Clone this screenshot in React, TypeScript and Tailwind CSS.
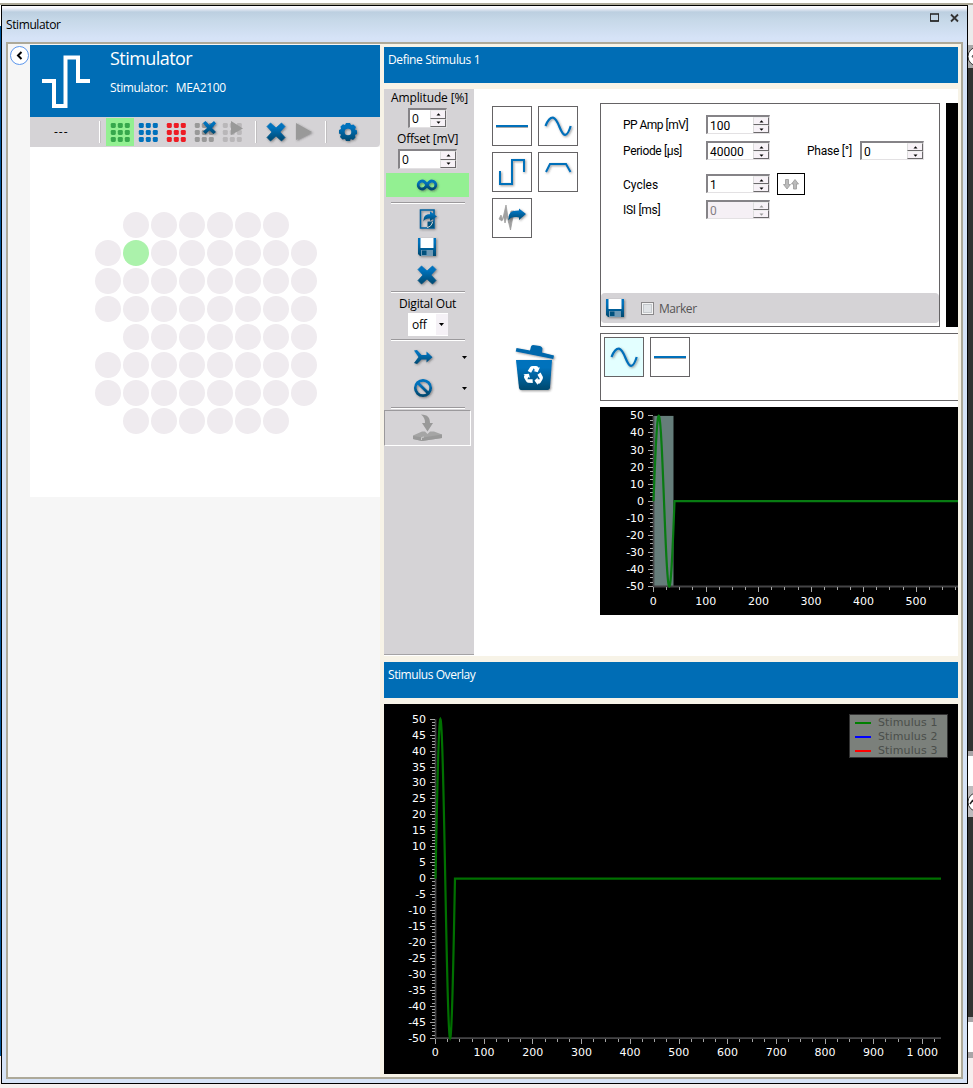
import type { ReactNode } from "react";

const range = (n: number) => Array.from({ length: n }, (_, i) => i);

function Icon({ w, h, children, className = "" }: { w: number; h: number; children: ReactNode; className?: string }) {
  return (
    <svg width={w} height={h} viewBox={`0 0 ${w} ${h}`} className={`block shrink-0 overflow-visible ${className}`}>
      {children}
    </svg>
  );
}

function Defs() {
  return (
    <svg width="0" height="0" className="absolute">
      <defs>
        <linearGradient id="blue" x1="0" y1="0" x2="0" y2="1">
          <stop offset="0.25" stopColor="#0072bc" />
          <stop offset="0.95" stopColor="#004b73" />
        </linearGradient>
        <filter id="shade" x="-30%" y="-30%" width="170%" height="170%">
          <feDropShadow dx="1" dy="1" stdDeviation="0.8" floodColor="#333" floodOpacity="0.5" />
        </filter>
      </defs>
    </svg>
  );
}

function Cross({ s = 20 }: { s?: number }) {
  return (
    <svg width={s} height={s} viewBox="0 0 20 20" className="block shrink-0 overflow-visible">
      <path
        d="M1 4.500 4.500 1 10 6 15.500 1 19 4.500 14 10 19 15.500 15.500 19 10 14 4.500 19 1 15.500 6 10Z"
        fill="url(#blue)"
        stroke="url(#blue)"
        strokeWidth="0.8"
        strokeLinejoin="round"
        filter="url(#shade)"
      />
    </svg>
  );
}

function DotGrid({ color }: { color: string }) {
  return (
    <>
      {range(9).map((i) => (
        <rect key={i} x={4.8 + (i % 3) * 7} y={4.9 + Math.floor(i / 3) * 7} width="5" height="5" rx="1.3" fill={color} />
      ))}
    </>
  );
}

function Floppy() {
  return (
    <Icon w={20} h={20}>
      <g filter="url(#shade)">
        <path d="M1 1H19V19H3L1 17Z" fill="url(#blue)" />
        <path d="M3.500 1H16.500V11H3.500Z" fill="#fff" />
        <path d="M4 13H16V19H4Z" fill="#6f9ab5" />
        <path d="M5 13.500H9.500V18H5Z" fill="#00517d" />
      </g>
    </Icon>
  );
}

function Spinner({ value, size, disabled = false }: { value: string; size: string; disabled?: boolean }) {
  return (
    <div
      className={`flex shrink-0 border-t-2 border-l-2 border-r border-b border-t-[#858387] border-l-[#858387] border-r-[#e3e1e3] border-b-[#e3e1e3] ${
        disabled ? "bg-[#f5f0f5]" : "bg-white"
      } ${size}`}
    >
      <span className={`flex-1 pl-[2px] pt-[1px] text-[12px] leading-[16px] ${disabled ? "text-[#857f85]" : "text-black"}`}>{value}</span>
      <div className="flex w-4 flex-col">
        {[0, 1].map((i) => (
          <div
            key={i}
            className="flex flex-1 items-center justify-center border border-t-[#eee] border-l-[#ddd] border-r-[#6b696b] border-b-[#6b696b] bg-[#f7f2f7]"
          >
            <svg width="5" height="3" viewBox="0 0 5 3">
              <path d={i ? "M0.500 0.500H4.500L2.500 2.800Z" : "M0.500 2.500H4.500L2.500 0.200Z"} fill={disabled ? "#999" : "#000"} />
            </svg>
          </div>
        ))}
      </div>
    </div>
  );
}

function Tile({ children, active = false }: { children: ReactNode; active?: boolean }) {
  return (
    <div className={`h-10 w-10 shrink-0 border border-[#656365] ${active ? "bg-[#e3ffff]" : "bg-white"}`}>
      <svg width="38" height="38" viewBox="1 1 38 38" className="block">
        {children}
      </svg>
    </div>
  );
}

const Flat = () => (
  <g filter="drop-shadow(0 1px 0.7px #aaa)">
    <rect x="4" y="19" width="32" height="2" fill="#0070ba" />
  </g>
);
const Sine = () => (
  <path
    d="M7.500 20C10.500 12.500 13 11.500 15 11.700C21 13 22 28.500 27 28.800C30 29 31.500 24 32.700 20"
    fill="none"
    stroke="#0070ba"
    strokeWidth="2.2"
    filter="url(#shade)"
  />
);

function Divider() {
  return <div className="mx-[7px] w-[74px] shrink-0 border-t border-b border-t-[#9b999c] border-b-white" />;
}

function Caret() {
  return (
    <Icon w={5} h={3}>
      <path d="M0 0H5L2.500 3Z" fill="#000" />
    </Icon>
  );
}

type ChartProps = {
  w: number;
  h: number;
  x0: number;
  kx: number;
  y0: number;
  ky: number;
  xMax: number;
  xLast: number;
  yMajor: number;
  yMinor: number;
  shaded?: boolean;
};

function Chart({ w, h, x0, kx, y0, ky, xMax, xLast, yMajor, yMinor, shaded = false }: ChartProps) {
  const X = (v: number) => x0 + v * kx;
  const Y = (v: number) => y0 - v * ky;
  const pts = range(81)
    .map((i) => `${X(i / 2).toFixed(2)},${Y(50 * Math.sin((Math.PI * i) / 40)).toFixed(2)}`)
    .join(" ");
  const yTicks = range(Math.round(100 / yMinor) + 1).map((i) => 50 - i * yMinor);
  const xTicks = range(Math.floor(xMax / 25) + 1).map((i) => i * 25);
  return (
    <svg width={w} height={h} viewBox={`0 0 ${w} ${h}`} className="block bg-black font-['DejaVu_Sans',sans-serif] text-[11px]" fill="#fff">
      {shaded && <rect x={x0} y={Y(50)} width="20" height={100 * ky} fill="#657d7a" />}
      <path d={`M${x0} ${Y(50)}V${Y(-50)}H${X(xMax)}`} fill="none" stroke="#444446" strokeWidth="1.8" />
      <g fill="#a5a5a5">
        {yTicks.map((v) => {
          const major = v % yMajor === 0;
          return <rect key={v} x={Math.floor(x0) - (major ? 5 : 3)} y={Math.floor(Y(v))} width={major ? 5 : 3} height="1" />;
        })}
        {xTicks.map((v) => (
          <rect key={v} x={Math.floor(X(v))} y={Math.floor(Y(-50)) + 1} width="1" height={v % 100 === 0 ? 5 : 3} />
        ))}
      </g>
      {yTicks
        .filter((v) => v % yMajor === 0)
        .map((v) => (
          <text key={v} x={x0 - 9.4} y={Math.round(Y(v) + 3.5)} textAnchor="end">
            {v}
          </text>
        ))}
      {xTicks
        .filter((v) => v % 100 === 0 && v <= xLast)
        .map((v) => (
          <text key={v} x={X(v) - 0.2} y={Math.round(Y(-50) + 18)} textAnchor="middle">
            {v === 1000 ? "1 000" : v}
          </text>
        ))}
      <polyline points={`${pts} ${X(xMax)},${y0}`} fill="none" stroke={shaded ? "#087b12" : "#007000"} strokeWidth="2.2" />
    </svg>
  );
}

function Legend() {
  const rows = [
    ["Stimulus 1", "bg-[#008000]"],
    ["Stimulus 2", "bg-[#0000ff]"],
    ["Stimulus 3", "bg-[#ff0000]"],
  ];
  return (
    <div className="absolute top-[10px] right-[10px] h-[44px] w-[99px] border border-[#333] bg-[#7b807b] pt-px pl-[5px] font-['DejaVu_Sans',sans-serif] text-[11px] leading-[14px] tracking-[0.13px] text-[#4a4e4a]">
      {rows.map(([name, c]) => (
        <div key={name} className="flex items-center gap-[7px] whitespace-nowrap">
          <span className={`h-[2px] w-4 shrink-0 ${c}`} />
          {name}
        </div>
      ))}
    </div>
  );
}

const electrodeRows = [
  [1, 6],
  [0, 8],
  [0, 8],
  [0, 8],
  [1, 7],
  [0, 8],
  [0, 8],
  [1, 6],
];

function LeftPanel() {
  return (
    <div className="flex w-[372px] bg-[#f6f6f6]">
      <div className="w-[22px] pt-[2px] pl-[1px]">
        <Icon w={20} h={20}>
          <circle cx="10.500" cy="9.500" r="9" fill="#fff" stroke="#5c96ec" />
          <path d="M12.500 6 9 9.500 12.500 13" fill="none" stroke="#000" strokeWidth="2" />
        </Icon>
      </div>
      <div className="w-[350px] pt-[1px]">
        <div className="flex h-[72px] bg-[#006db5] text-white">
          <Icon w={80} h={72}>
            <path d="M12 36H24V61H35.500V12.500H48V36H60" fill="none" stroke="#fff" strokeWidth="4" />
          </Icon>
          <div className="flex flex-col">
            <span className="mt-[1px] text-[18px] leading-6 tracking-[-0.55px]">Stimulator</span>
            <span className="mt-[10px] flex gap-[8px] text-[12px] leading-4 tracking-[-0.35px]">
              <span>Stimulator:</span>
              <span>MEA2100</span>
            </span>
          </div>
        </div>
        <div className="flex h-[30px] items-center rounded-br-sm bg-[#d5d3d6]">
          <span className="w-[60px] pl-[24px] text-[12px] tracking-[1px]">---</span>
          <span className="ml-[9px] h-[22px] w-[2px] border-l border-l-white bg-[#c0bec0]" />
          <div className="ml-[5px] flex h-[28px]">
            <Icon w={28} h={28} className="bg-[#93f092]">
              <DotGrid color="#36a84c" />
            </Icon>
            <Icon w={28} h={28}>
              <DotGrid color="#0071bc" />
            </Icon>
            <Icon w={28} h={28}>
              <DotGrid color="#ee1c24" />
            </Icon>
            <Icon w={28} h={28}>
              <DotGrid color="#999" />
              <path
                d="M13 5 15.500 3 19.500 7 24 3 26 5.500 22 10 26 14 23.500 16 19.500 12.500 15.500 16 13 13.500 17 10Z"
                fill="url(#blue)"
                filter="url(#shade)"
              />
            </Icon>
            <Icon w={28} h={28}>
              <DotGrid color="#b9b7b9" />
              <path d="M13 3V17L25 10.500Z" fill="#999" />
            </Icon>
          </div>
          <span className="ml-[9px] h-[22px] w-[2px] border-l border-l-white bg-[#c0bec0]" />
          <div className="ml-[9px]">
            <Cross />
          </div>
          <Icon w={18} h={20} className="ml-[9px]">
            <path d="M1 1V18L17 10Z" fill="#999" filter="url(#shade)" />
          </Icon>
          <span className="ml-[12px] h-[22px] w-[2px] border-l border-l-white bg-[#c0bec0]" />
          <Icon w={20} h={20} className="ml-[11px]">
            <path
              fillRule="evenodd"
              d="M8 1H12L13 3 15.500 2.500 18 5 17 7.500 19 8.500V12L17 13 17.500 15.500 15 18 12.800 17 12 19H8L7 17 4.500 17.500 2 15 3 12.500 1 11.500V8L3 7 2.500 4.500 5 2.200 7 3ZM10 6.700A3.300 3.300 0 1 0 10 13.300A3.300 3.300 0 1 0 10 6.700Z"
              fill="url(#blue)"
              filter="url(#shade)"
            />
          </Icon>
        </div>
        <div className="flex h-[350px] flex-col gap-[2px] bg-white pt-[65px] pl-[65px]">
          {electrodeRows.map(([skip, count], r) => (
            <div key={r} className={`flex gap-[2px] ${skip ? "pl-7" : ""}`}>
              {range(count).map((c) => (
                <span key={c} className={`h-[26px] w-[26px] rounded-full ${r === 1 && c === 1 ? "bg-[#abf2ab]" : "bg-[#efebef]"}`} />
              ))}
            </div>
          ))}
        </div>
      </div>
    </div>
  );
}

function Sidebar() {
  return (
    <div className="flex h-[566px] w-[90px] flex-col border-b border-[#a5a3a5] bg-[#d5d3d6] text-[12px] leading-4 tracking-[-0.2px] whitespace-nowrap">
      <div className="mt-[1px] pl-[7px] tracking-[-0.12px]">Amplitude [%]</div>
      <div className="mt-[2px] pl-6">
        <Spinner value="0" size="h-5 w-[39px]" />
      </div>
      <div className="mt-[3px] pl-[13px]">Offset [mV]</div>
      <div className="mt-[2px] pl-[14px]">
        <Spinner value="0" size="h-5 w-[59px]" />
      </div>
      <div className="mt-1 ml-[2px] flex h-6 w-[83px] items-center justify-center bg-[#93f092]">
        <Icon w={20} h={12} className="mr-[2px]">
          <path
            d="M10 6C8 2.500 6.800 2 5.200 2A4 4 0 0 0 5.200 10C6.800 10 8 9.500 10 6C12 2.500 13.200 2 14.800 2A4 4 0 0 1 14.800 10C13.200 10 12 9.500 10 6Z"
            fill="none"
            stroke="url(#blue)"
            strokeWidth="2.8"
            filter="url(#shade)"
          />
        </Icon>
      </div>
      <div className="mt-[5px]">
        <Divider />
      </div>
      <div className="mt-[5px] flex flex-col gap-2 pl-[33px]">
        <Icon w={20} h={20}>
          <g filter="url(#shade)">
            <path d="M3.500 1H17V19H3.500Z" fill="none" stroke="#00629f" strokeWidth="1.600" />
            <path d="M6.500 12.500C6.500 7 8.500 5 13 5.200V2.300L20 7.500 13 12V9.500C10 9.300 8 10 6.500 12.500Z" fill="url(#blue)" />
            <path d="M10.500 12.500H17V19H10.500Z" fill="#00527e" />
            <path d="M10 18.500C13 18 15 16 15.500 13" fill="none" stroke="#ddd" strokeWidth="1" />
          </g>
        </Icon>
        <Floppy />
        <Cross />
      </div>
      <div className="mt-[6px]">
        <Divider />
      </div>
      <div className="mt-[3px] pl-[15px]">Digital Out</div>
      <div className="mt-[1px] ml-6 flex h-[23px] w-10 items-center bg-white pl-[4px]">
        off
        <span className="ml-auto flex h-[21px] w-[12px] items-center justify-center bg-[#f5f1f6] pr-[2px]">
          <Caret />
        </span>
      </div>
      <div className="mt-[3px]">
        <Divider />
      </div>
      <div className="mt-[6px] flex h-5 items-center pl-[29px]">
        <Icon w={20} h={20}>
          <path
            d="M1 3.500 4 3 8.500 8H13.500V4.500L19.500 10.200 13.500 15.500V12.500H8.500L4 17 1 16 5.500 10Z"
            fill="url(#blue)"
            filter="url(#shade)"
          />
        </Icon>
        <span className="ml-[29px]">
          <Caret />
        </span>
      </div>
      <div className="mt-[11px] flex h-5 items-center pl-[29px]">
        <Icon w={20} h={20}>
          <g fill="none" stroke="url(#blue)" strokeWidth="2.700" filter="url(#shade)">
            <circle cx="10" cy="10" r="7.700" />
            <path d="M4.700 4.700 15.300 15.300" />
          </g>
        </Icon>
        <span className="ml-[29px]">
          <Caret />
        </span>
      </div>
      <div className="mt-[9px]">
        <Divider />
      </div>
      <div className="mt-[1px] flex h-[36px] w-[87px] items-center border border-t-[#9b999c] border-l-[#9b999c] border-r-white border-b-white pl-[27px]">
        <Icon w={30} h={28}>
          <g fill="#999">
            <path d="M9 0.500C16 0.500 18 4 18 9H21L15.500 17.500 10 9H13C13 5 12 3 9 0.500Z" />
            <path d="M1 21.500 10 17.500H13L15.500 20 18 17.500H22L30 20.500V24L10 27 1 25Z" fill="#a5a5a5" />
            <path d="M1 22 11 23.500 30 20.500V24L10 27 1 25Z" />
            <path d="M9.500 26V23.500L12 23" fill="none" stroke="#ccc" />
          </g>
        </Icon>
      </div>
    </div>
  );
}

function TrashCan() {
  return (
    <Icon w={40} h={48}>
      <g filter="url(#shade)" fill="url(#blue)">
        <path
          d="M1.500 4 15 6.500 16 2.500Q16.500 1 18 1L25 2Q27 2.500 27.500 4.500L27 8.500 39 11.500 38.300 15 0.700 7.500Z"
          fill="#0068ac"
        />
        <path d="M1 16H37L35 44Q34.500 46 32.500 46H6Q4.500 46 4 44Z" />
      </g>
      <g transform="translate(18.700 31.500)" fill="#fff">
        {[0, 120, 240].map((a) => (
          <g key={a} transform={`rotate(${a})`}>
            <path d="M-6 -4.500 -3.500 -8.500Q-2.700 -9.500 -1 -9.500H2.500Q4 -9.500 5 -7.700L6.300 -8.300 4 -3.200 -0.300 -4.500 1.300 -5.300 0 -7.300 -2.600 -2.800Z" />
          </g>
        ))}
      </g>
    </Icon>
  );
}

function Parameters() {
  return (
    <div className="flex h-[224px] w-[340px] flex-col border border-[#656365] bg-white font-['Roboto',sans-serif] text-[12px] leading-[21px]">
      <div className="mt-[11px] flex h-[19px]">
        <span className="w-[105px] pl-[22px] tracking-[-0.52px]">PP Amp [mV]</span>
        <Spinner value="100" size="h-[19px] w-16" />
      </div>
      <div className="mt-[7px] flex h-[19px]">
        <span className="w-[105px] pl-[22px] tracking-[-0.35px]">Periode [µs]</span>
        <Spinner value="40000" size="h-[19px] w-16" />
        <span className="w-[90px] pl-[37px] tracking-[-0.25px]">Phase [°]</span>
        <Spinner value="0" size="h-[19px] w-16" />
      </div>
      <div className="mt-[13px] flex h-[22px] items-center">
        <span className="w-[105px] pt-[2px] pl-[22px]">Cycles</span>
        <Spinner value="1" size="-mt-px h-[19px] w-16" />
        <div className="ml-[7px] flex h-[22px] w-7 items-center justify-center border border-black">
          <Icon w={16} h={12}>
            <g fill="#bbb" stroke="#999" strokeWidth="0.8">
              <path d="M2.500 1.500H5.500V6.500H7.500L4 11 0.500 6.500H2.500Z" />
              <path d="M10.500 11H13.500V6H15.500L12 1.500 8.500 6H10.500Z" />
            </g>
          </Icon>
        </div>
      </div>
      <div className="mt-[5px] flex h-[19px]">
        <span className="w-[105px] pl-[22px] tracking-[-0.3px]">ISI [ms]</span>
        <Spinner value="0" size="h-[19px] w-16" disabled />
      </div>
      <div className="mt-auto mb-[3px] flex h-[30px] items-center rounded bg-[#d5d3d6] pl-[4px]">
        <Floppy />
        <span className="ml-4 flex h-[13px] w-[13px] items-center justify-center border border-[#8a888a] bg-[#f4f4f4]">
          <span className="h-[9px] w-[9px] border border-[#c4c8cc] bg-[#e0e3e6]" />
        </span>
        <span className="ml-[5px] font-['Open_Sans',sans-serif] text-[12px] tracking-[-0.45px] text-[#555]">Marker</span>
      </div>
    </div>
  );
}

function RightPanel() {
  return (
    <div className="flex w-[581px] flex-col bg-[#f7f3e7] pt-[3px] pr-[3px] pl-1">
      <div className="h-9 bg-[#006db5] pt-[5px] pl-1 text-[12px] leading-4 tracking-[-0.35px] text-white">Define Stimulus 1</div>
      <div className="mt-[6px] flex h-[567px] bg-white">
        <Sidebar />
        <div className="w-[126px] pt-[17px] pl-[18px]">
          <div className="flex flex-wrap gap-[6px]">
            <Tile>
              <Flat />
            </Tile>
            <Tile>
              <Sine />
            </Tile>
            <Tile>
              <path d="M8 19V32H20V8H32V20" fill="none" stroke="#0070ba" strokeWidth="2" filter="url(#shade)" />
            </Tile>
            <Tile>
              <path d="M8 20 12 12H28L32.500 20" fill="none" stroke="#0070ba" strokeWidth="2" filter="url(#shade)" />
            </Tile>
            <Tile>
              <path
                d="M7 21 9 17 10.500 22 14 7 17 25 19 13H22L18.500 32 15 18 13 25 11.500 18 10 23Z"
                fill="#a0a0a0"
                stroke="#a0a0a0"
                strokeWidth="0.800"
              />
              <path d="M16.500 22.500C16 15 19 12.300 27 12.500V10.500L34 16 27 22V19.500C22 18.500 19 19 16.500 22.500Z" fill="url(#blue)" filter="url(#shade)" />
            </Tile>
          </div>
          <div className="mt-[106px] ml-[23px]">
            <TrashCan />
          </div>
        </div>
        <div className="w-[358px] overflow-hidden pt-[14px]">
          <div className="flex gap-[6px]">
            <Parameters />
            <div className="w-3 bg-black" />
          </div>
          <div className="mt-[6px] flex h-[68px] gap-[6px] border border-r-0 border-[#656365] p-[3px]">
            <Tile active>
              <Sine />
            </Tile>
            <Tile>
              <Flat />
            </Tile>
          </div>
          <div className="mt-[6px]">
            <Chart w={358} h={208} x0={53.5} kx={0.5255} y0={94.2} ky={1.706} xMax={600} xLast={500} yMajor={10} yMinor={2.5} shaded />
          </div>
        </div>
      </div>
      <div className="mt-[6px] h-9 bg-[#006db5] pt-[5px] pl-1 text-[12px] leading-4 tracking-[-0.43px] text-white">Stimulus Overlay</div>
      <div className="relative mt-[6px] h-[370px]">
        <Chart w={574} h={370} x0={51.5} kx={0.487} y0={174.7} ky={3.19} xMax={1038} xLast={1000} yMajor={5} yMinor={1} />
        <Legend />
      </div>
    </div>
  );
}

function Backdrop() {
  return (
    <div className="mt-[5px] flex w-[5px] flex-col overflow-hidden">
      <div className="h-10 bg-[#ebebeb]" />
      <Icon w={5} h={23} className="bg-[#a8a8a8]">
        <circle cx="9.500" cy="11.500" r="9.500" fill="#fff" stroke="#333" />
        <path d="M7 8 4 11.500 7 14" stroke="#222" fill="none" />
      </Icon>
      <div className="h-[683px] bg-[#333331]" />
      <div className="h-[5px] bg-[#a8a6a8]" />
      <div className="h-[30px] bg-white" />
      <Icon w={5} h={31} className="bg-[#bdbbbd]">
        <circle cx="9.500" cy="16" r="9.500" fill="#fff" stroke="#333" />
        <path d="M2 18 5 14" stroke="#222" strokeWidth="1.500" />
      </Icon>
      <div className="h-[200px] bg-[#333331]" />
      <div className="h-[5px] bg-[#a8a6a8]" />
      <div className="h-[30px] bg-white" />
      <div className="h-[6px] bg-[#a8a6a8]" />
    </div>
  );
}

export default function App() {
  return (
    <div className="flex h-[1088px] w-[973px] overflow-hidden bg-[linear-gradient(to_bottom,#fff_3px,#ada999_3px,#ada999_5px,#f6eeee_5px)] font-['Open_Sans',sans-serif] text-black">
      <Defs />
      <div className="mt-[5px] h-[1051px] w-px border-t-[21px] border-white bg-[#00569c]" />
      <div className="mt-[5px] flex h-[1079px] w-[967px] flex-col border border-black bg-[#d6e3f7] px-1">
        <div className="-mx-1 flex h-9 shrink-0 items-start bg-[linear-gradient(to_bottom,#fff_0px,#f4f4fc_2px,#bccfe0_6px,#c6d8e8_14px,#d6e3f7_32px)] pl-1">
          <span className="mt-[11px] text-[12px] leading-4 tracking-[-0.4px]">Stimulator</span>
          <Icon w={9} h={9} className="mt-[7px] ml-auto">
            <path d="M0.500 1V8H8.500V1" fill="none" stroke="#333" />
            <path d="M0 1H9M0 8H9" stroke="#222" strokeWidth="1.500" />
          </Icon>
          <Icon w={9} h={8} className="mt-[8px] mr-[8px] ml-[11px]">
            <path d="M1 0.500 8 7.500M8 0.500 1 7.500" stroke="#333" strokeWidth="1.800" />
          </Icon>
        </div>
        <div className="flex h-[1037px] w-[957px] border-2 border-[#ada999]">
          <LeftPanel />
          <RightPanel />
        </div>
      </div>
      <Backdrop />
    </div>
  );
}
